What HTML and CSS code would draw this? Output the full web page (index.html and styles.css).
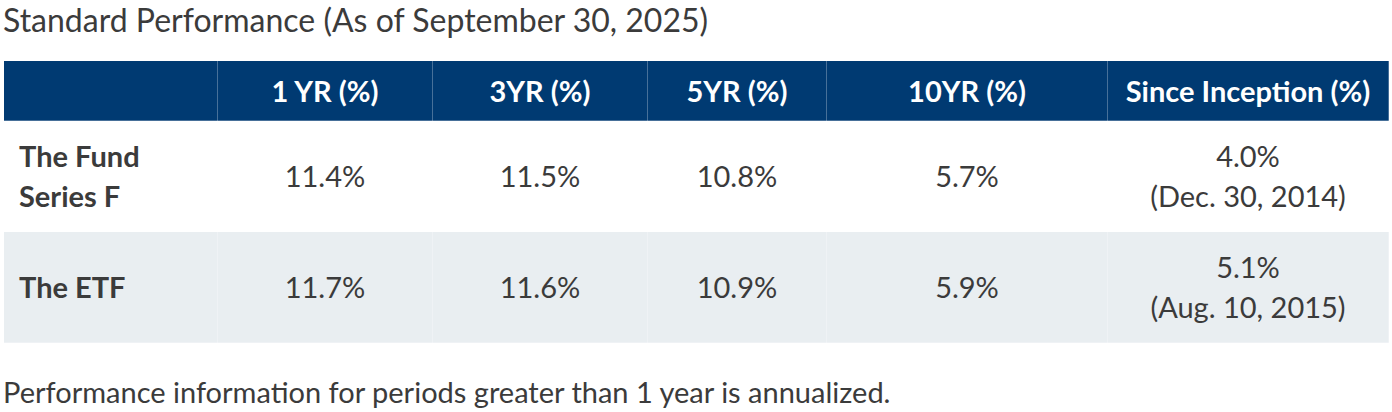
FILE: index.html
```html
<!DOCTYPE html>
<html lang="en">
<head>
<meta charset="utf-8">
<title>Standard Performance</title>
<link rel="stylesheet" href="styles.css">
</head>
<body>
<div class="perf">
  <h2 class="perf-title">Standard Performance (As of September 30, 2025)</h2>
  <table class="perf-table">
    <colgroup>
      <col class="c-label">
      <col class="c-1">
      <col class="c-3">
      <col class="c-5">
      <col class="c-10">
      <col class="c-si">
    </colgroup>
    <thead>
      <tr>
        <th></th>
        <th>1 YR (%)</th>
        <th>3YR (%)</th>
        <th>5YR (%)</th>
        <th>10YR (%)</th>
        <th>Since Inception (%)</th>
      </tr>
    </thead>
    <tbody>
      <tr>
        <th class="row-label">The Fund<br>Series F</th>
        <td>11.4%</td>
        <td>11.5%</td>
        <td>10.8%</td>
        <td>5.7%</td>
        <td>4.0%<br>(Dec. 30, 2014)</td>
      </tr>
      <tr class="alt">
        <th class="row-label">The ETF</th>
        <td>11.7%</td>
        <td>11.6%</td>
        <td>10.9%</td>
        <td>5.9%</td>
        <td>5.1%<br>(Aug. 10, 2015)</td>
      </tr>
    </tbody>
  </table>
  <p class="perf-note">Performance information for periods greater than 1 year is annualized.</p>
</div>
</body>
</html>
```
FILE: styles.css
```css
html, body {
  margin: 0;
  padding: 0;
  background: #ffffff;
}

body {
  font-family: Lato, "Open Sans", Arial, sans-serif;
  color: #3b3b3b;
}

.perf {
  padding: 0 4px 0 3px;
}

.perf-title {
  margin: 0;
  font-size: 32px;
  line-height: 40px;
  font-weight: 400;
  color: #3b3b3b;
}

.perf-table {
  width: 100%;
  margin-top: 20px;
  border-collapse: collapse;
  table-layout: fixed;
  font-size: 29px;
}

.c-label { width: 214px; }
.c-1 { width: 215px; }
.c-3 { width: 215px; }
.c-5 { width: 179px; }
.c-10 { width: 281px; }
.c-si { width: 281px; }

.perf-table th,
.perf-table td {
  border: 1px solid rgba(255, 255, 255, 0.28);
  text-align: center;
  vertical-align: middle;
  line-height: 40px;
}

.perf-table thead th {
  background: #003a72;
  color: #ffffff;
  font-weight: 700;
  height: 59px;
  padding: 0 8px;
}

.perf-table tbody td,
.perf-table tbody th {
  padding: 15px 8px;
  font-weight: 400;
  color: #3b3b3b;
}

.perf-table tbody .row-label {
  text-align: left;
  padding-left: 15px;
  font-weight: 700;
}

.perf-table tr.alt td,
.perf-table tr.alt th {
  background: #e9eef1;
}

.perf-note {
  margin: 29px 0 0;
  font-size: 29px;
  line-height: 40px;
  color: #3b3b3b;
}
```
